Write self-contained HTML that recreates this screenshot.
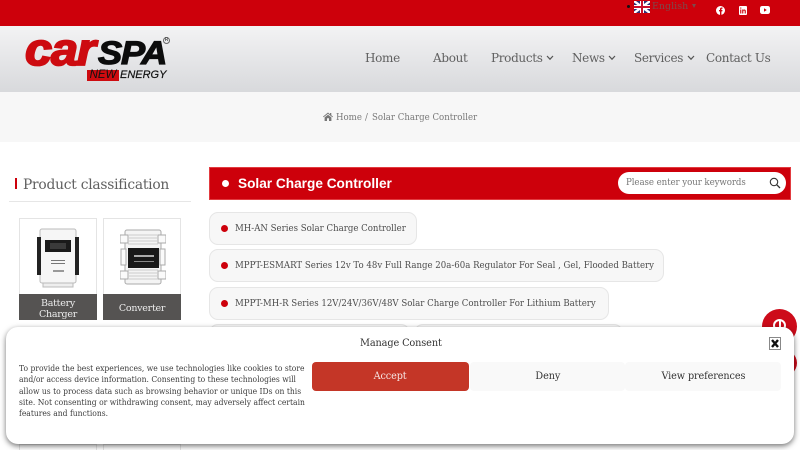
<!DOCTYPE html>
<html lang="en"><head><meta charset="utf-8"><title>Solar Charge Controller</title>
<style>
*{box-sizing:border-box}
html,body{margin:0;padding:0;width:800px;height:450px;overflow:hidden}
body{background:#fff;font-family:"DejaVu Serif","Liberation Serif",serif;color:#555}
#w{position:relative;width:800px;height:450px;overflow:hidden}
.a{position:absolute;white-space:nowrap}
.top{left:0;top:0;width:800px;height:26px;background:#cd000b}
.hdr{left:0;top:26px;width:800px;height:66px;background:linear-gradient(#f3f3f4,#d8d9dc)}
.crumb{left:0;top:92px;width:800px;height:50px;background:#f7f7f7}
.nav{font-size:12px;color:#606060;line-height:16px;letter-spacing:-.027em}
.chip{left:209px;height:33px;border:1px solid #e6e6e6;border-radius:9px;background:#f7f7f7;font-size:9px;line-height:32px;padding-left:25px;color:#4d4d4d}
.chip:before{content:"";position:absolute;left:11px;top:12px;width:7px;height:7px;border-radius:50%;background:#cd000b}
.chip span{display:inline-block;transform:scaleX(.955);transform-origin:left}
.card{width:78px;height:102px;border:1px solid #e4e4e4;background:#fff}
.cap{position:absolute;left:-1px;bottom:-1px;width:78px;height:26px;background:#555352;color:#eee;font-size:9.5px;line-height:11px;letter-spacing:-.027em;text-align:center;display:flex;align-items:center;justify-content:center;white-space:normal;padding-top:3px}
.btn{top:362px;height:29px;border-radius:4px;font-size:10px;letter-spacing:-.1px;line-height:30px;text-align:center;background:#f9f9f9;color:#333}
.btn span{display:inline-block;transform:scaleX(.966)}
.bc{top:110.5px;font-size:9px;line-height:14px;color:#787878;transform:scaleX(.955);transform-origin:left}
</style></head><body><div id="w">
<div class="a top"></div>
<div class="a hdr"></div>
<div class="a crumb"></div>

<!-- language + social -->
<div class="a" style="left:627px;top:5px;width:3px;height:3px;border-radius:50%;background:#111"></div>
<svg class="a" style="left:634px;top:1px" width="16" height="12" viewBox="0 0 16 12"><rect width="16" height="12" fill="#2b2f78"/><path d="M0 0L16 12M16 0L0 12" stroke="#fff" stroke-width="2.4"/><path d="M8 0V12M0 6H16" stroke="#fff" stroke-width="4"/><path d="M8 0V12M0 6H16" stroke="#c8102e" stroke-width="2"/></svg>
<div class="a" style="left:652px;top:1px;font-size:9.5px;line-height:12px;color:#7c4a4c">English</div>
<div class="a" style="left:692px;top:4px;width:0;height:0;border-left:2px solid transparent;border-right:2px solid transparent;border-top:4px solid #7c4a4c"></div>
<svg class="a" style="left:716px;top:6px" width="9" height="9" viewBox="0 0 9 9"><circle cx="4.5" cy="4.5" r="4.5" fill="#fff"/><path d="M4 9V5.4H3V4H4V3C4 2 4.7 1.5 5.5 1.5H6.5V2.8H5.9C5.5 2.8 5.4 3 5.4 3.3V4H6.5L6.3 5.4H5.4V9Z" fill="#cd000b"/></svg>
<svg class="a" style="left:739px;top:6px" width="8" height="9" viewBox="0 0 8 9"><rect width="8" height="9" rx="1" fill="#fff"/><path d="M1.2 3.5H2.3V7.5H1.2ZM1.2 1.5H2.3V2.6H1.2ZM3.2 3.5H4.2V4C4.6 3.4 6.8 3 6.8 5V7.5H5.7V5.3C5.7 4.2 4.3 4.2 4.3 5.3V7.5H3.2Z" fill="#cd000b"/></svg>
<svg class="a" style="left:760px;top:6px" width="10" height="8" viewBox="0 0 10 8"><rect width="10" height="8" rx="2.2" fill="#fff"/><path d="M4 2.3L6.8 4L4 5.7Z" fill="#cd000b"/></svg>

<!-- logo -->
<div class="a" style="left:25px;top:28px;font:italic 700 45px/44px 'Liberation Sans',sans-serif;color:#cd0b10;letter-spacing:-1px;-webkit-text-stroke:1.8px #cd0b10;transform:scaleX(1.08);transform-origin:left">car</div>
<div class="a" style="left:98px;top:34px;font:italic 700 32px/38px 'Liberation Sans',sans-serif;color:#0c0c0c;letter-spacing:-1px;transform:scaleX(1.13);transform-origin:left;-webkit-text-stroke:1.2px #0c0c0c">SPA</div>
<div class="a" style="left:163px;top:37px;width:7px;height:7px;border:1px solid #666;border-radius:50%;font:700 5px/5px 'Liberation Sans',sans-serif;color:#555;text-align:center">R</div>
<div class="a" style="left:87px;top:70px;width:32px;height:11px;background:#cd0b10;color:#111;font:italic 400 11.5px/11px 'Liberation Sans',sans-serif;text-align:center">NEW</div>
<div class="a" style="left:120px;top:69px;color:#111;font:italic 400 11px/13px 'Liberation Sans',sans-serif;-webkit-text-stroke:.2px #111">ENERGY</div>

<!-- nav -->
<div class="a nav" style="left:365px;top:50px">Home</div>
<div class="a nav" style="left:433px;top:50px">About</div>
<div class="a nav" style="left:491px;top:50px">Products</div>
<div class="a nav" style="left:572px;top:50px">News</div>
<div class="a nav" style="left:634px;top:50px">Services</div>
<div class="a nav" style="left:706px;top:50px">Contact Us</div>
<svg class="a" style="left:546px;top:55px" width="8" height="6" viewBox="0 0 8 6"><path d="M1 1L4 4.2L7 1" fill="none" stroke="#555" stroke-width="1.2"/></svg>
<svg class="a" style="left:608px;top:55px" width="8" height="6" viewBox="0 0 8 6"><path d="M1 1L4 4.2L7 1" fill="none" stroke="#555" stroke-width="1.2"/></svg>
<svg class="a" style="left:687px;top:55px" width="8" height="6" viewBox="0 0 8 6"><path d="M1 1L4 4.2L7 1" fill="none" stroke="#555" stroke-width="1.2"/></svg>

<!-- breadcrumb -->
<svg class="a" style="left:323px;top:112px" width="10" height="9" viewBox="0 0 10 9"><path d="M5 0.5L0 4.6L.6 5.3L5 1.8L9.4 5.3L10 4.6L8.3 3.2V1H7V2.2ZM1.6 5.4V9H4V6.3H6V9H8.4V5.4L5 2.7Z" fill="#777"/></svg>
<div class="a bc" style="left:336px">Home</div>
<div class="a bc" style="left:365px">/</div>
<div class="a bc" style="left:372px">Solar Charge Controller</div>

<!-- sidebar -->
<div class="a" style="left:15px;top:178px;width:2px;height:11px;background:#cd000b"></div>
<div class="a" style="left:23px;top:176px;font-size:13.8px;letter-spacing:-.23px;line-height:18px;color:#606060">Product classification</div>
<div class="a" style="left:9px;top:201px;width:182px;height:1px;background:#e6e6e6"></div>

<div class="a card" style="left:19px;top:218px">
<svg style="position:absolute;left:17px;top:7px" width="44" height="62" viewBox="0 0 44 62"><rect x="3" y="3" width="36" height="54" rx="2" fill="#f6f6f6" stroke="#bbb"/><rect x="0" y="11" width="4" height="38" fill="#222"/><rect x="38" y="11" width="4" height="38" fill="#222"/><rect x="8" y="14" width="26" height="12" fill="#1a1a1a"/><rect x="13" y="17" width="16" height="6" fill="#3a3a3a"/><rect x="14" y="34" width="14" height="1" fill="#777"/><rect x="14" y="37" width="14" height="1" fill="#777"/><rect x="16" y="44" width="11" height="2" fill="#999"/><rect x="6" y="57" width="30" height="4" fill="#eee" stroke="#bbb"/></svg>
<div class="cap">Battery<br>Charger</div></div>
<div class="a card" style="left:103px;top:218px">
<svg style="position:absolute;left:16px;top:10px" width="46" height="56" viewBox="0 0 46 56"><rect x="5" y="1" width="36" height="54" rx="2" fill="#f4f4f4" stroke="#aaa"/><path d="M0 6H8V14H0ZM38 6H46V14H38ZM0 42H8V50H0ZM38 42H46V50H38ZM1 20H6V36H1ZM40 20H45V36H40Z" fill="#fafafa" stroke="#aaa"/><path d="M8 6H38M8 9H38M8 12H38M8 15H38M8 41H38M8 44H38M8 47H38M8 50H38" stroke="#ccc"/><rect x="8" y="19" width="31" height="20" fill="#181818"/><rect x="14" y="26" width="20" height="2" fill="#aaa"/><rect x="14" y="32" width="20" height="1" fill="#888"/></svg>
<div class="cap">Converter</div></div>

<div class="a card" style="left:19px;top:444px;height:20px"></div>
<div class="a card" style="left:103px;top:444px;height:20px"></div>

<!-- main title -->
<div class="a" style="left:209px;top:167px;width:582px;height:33px;background:#cd000b;border:1px solid #e23b40"></div>
<div class="a" style="left:222px;top:180px;width:7px;height:7px;border-radius:50%;background:#fff"></div>
<div class="a" style="left:238px;top:175px;font:700 13.65px/17px 'Liberation Sans',sans-serif;color:#fff">Solar Charge Controller</div>
<div class="a" style="left:618px;top:172px;width:168px;height:22px;border-radius:11px;background:#fff"></div>
<div class="a" style="left:626px;top:172px;height:22px;font-size:9px;letter-spacing:-.08px;line-height:23px;color:#777;transform:scaleX(.96);transform-origin:left">Please enter your keywords</div>
<svg class="a" style="left:769px;top:177px" width="12" height="12" viewBox="0 0 12 12"><circle cx="5" cy="5" r="3.7" fill="none" stroke="#333" stroke-width="1.1"/><path d="M7.7 7.7L11 11" stroke="#333" stroke-width="1.3"/></svg>

<!-- chips -->
<div class="a chip" style="top:212px;width:208px"><span>MH-AN Series Solar Charge Controller</span></div>
<div class="a chip" style="top:249px;width:455px"><span>MPPT-ESMART Series 12v To 48v Full Range 20a-60a Regulator For Seal , Gel, Flooded Battery</span></div>
<div class="a chip" style="top:287px;width:400px"><span>MPPT-MH-R Series 12V/24V/36V/48V Solar Charge Controller For Lithium Battery</span></div>
<div class="a chip" style="top:324px;width:201px"></div>
<div class="a chip" style="top:324px;left:414px;width:209px"></div>

<!-- floating -->
<div class="a" style="left:762px;top:309px;width:35px;height:35px;border-radius:50%;background:#cd0b1a"></div>
<div class="a" style="left:773px;top:319px;width:13px;height:13px;border-radius:50%;border:2px solid #fff"></div>
<div class="a" style="left:778.5px;top:321px;width:2px;height:7px;background:#fff"></div>
<div class="a" style="left:762px;top:348px;width:35px;height:30px;border-radius:50%;background:#cd0b1a"></div>

<!-- consent -->
<div class="a" style="left:6px;top:327px;width:788px;height:117px;background:#fff;border-radius:12px;box-shadow:0 2px 6px rgba(0,0,0,.55)"></div>
<div class="a" style="left:360px;top:337px;font-size:9.75px;letter-spacing:-.13px;line-height:14px;color:#333">Manage Consent</div>
<div class="a" style="left:769px;top:337px;width:12px;height:13px;border:1px solid #888;background:#fff"></div>
<svg class="a" style="left:770px;top:338px" width="10" height="11" viewBox="0 0 10 11"><path d="M2 2L8 9M8 2L2 9" stroke="#111" stroke-width="2.4"/></svg>
<div class="a" style="left:18.5px;top:363px;font-size:8px;line-height:11.3px;color:#3c3c3c;white-space:pre;transform:scaleX(.95);transform-origin:left">To provide the best experiences, we use technologies like cookies to store
and/or access device information. Consenting to these technologies will
allow us to process data such as browsing behavior or unique IDs on this
site. Not consenting or withdrawing consent, may adversely affect certain
features and functions.</div>
<div class="a btn" style="left:312px;width:157px;background:#c43627;color:#f6e6e4"><span>Accept</span></div>
<div class="a btn" style="left:470px;width:155px"><span>Deny</span></div>
<div class="a btn" style="left:625px;width:156px"><span>View preferences</span></div>
</div></body></html>
